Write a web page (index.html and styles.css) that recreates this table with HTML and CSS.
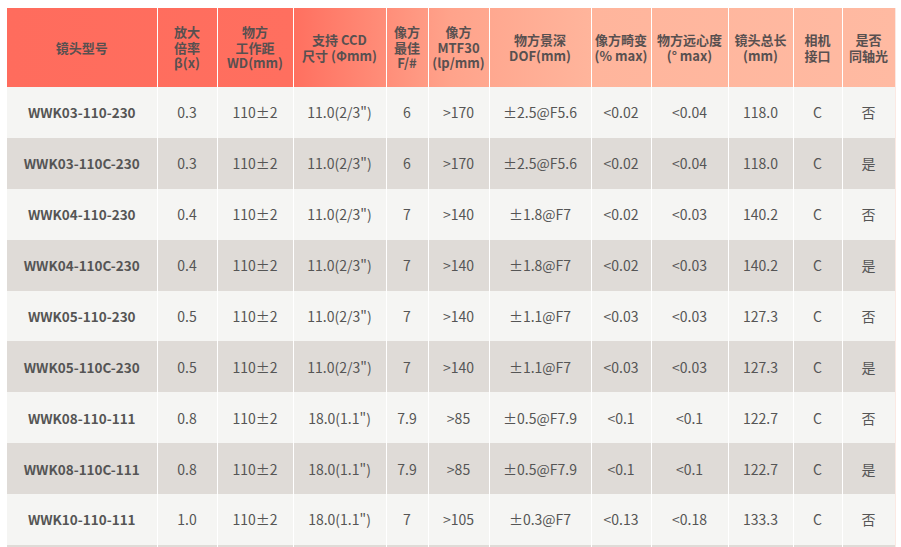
FILE: index.html
```html
<!DOCTYPE html>
<html lang="zh-CN">
<head>
<meta charset="utf-8">
<title>镜头参数</title>
<link rel="stylesheet" href="styles.css">
</head>
<body>
<table class="spec">
  <colgroup>
    <col class="c1"><col class="c2"><col class="c3"><col class="c4"><col class="c5"><col class="c6">
    <col class="c7"><col class="c8"><col class="c9"><col class="c10"><col class="c11"><col class="c12">
  </colgroup>
  <thead>
    <tr>
      <th>镜头型号</th>
      <th>放大<br>倍率<br>β(x)</th>
      <th>物方<br>工作距<br>WD(mm)</th>
      <th>支持 CCD<br>尺寸 (Φmm)</th>
      <th>像方<br>最佳<br>F/#</th>
      <th>像方<br>MTF30<br>(lp/mm)</th>
      <th>物方景深<br>DOF(mm)</th>
      <th>像方畸变<br>(% max)</th>
      <th>物方远心度<br>(° max)</th>
      <th>镜头总长<br>(mm)</th>
      <th>相机<br>接口</th>
      <th>是否<br>同轴光</th>
    </tr>
  </thead>
  <tbody>
    <tr><td class="model">WWK03-110-230</td><td>0.3</td><td>110±2</td><td>11.0(2/3")</td><td>6</td><td>&gt;170</td><td>±2.5@F5.6</td><td>&lt;0.02</td><td>&lt;0.04</td><td>118.0</td><td>C</td><td>否</td></tr>
    <tr><td class="model">WWK03-110C-230</td><td>0.3</td><td>110±2</td><td>11.0(2/3")</td><td>6</td><td>&gt;170</td><td>±2.5@F5.6</td><td>&lt;0.02</td><td>&lt;0.04</td><td>118.0</td><td>C</td><td>是</td></tr>
    <tr><td class="model">WWK04-110-230</td><td>0.4</td><td>110±2</td><td>11.0(2/3")</td><td>7</td><td>&gt;140</td><td>±1.8@F7</td><td>&lt;0.02</td><td>&lt;0.03</td><td>140.2</td><td>C</td><td>否</td></tr>
    <tr><td class="model">WWK04-110C-230</td><td>0.4</td><td>110±2</td><td>11.0(2/3")</td><td>7</td><td>&gt;140</td><td>±1.8@F7</td><td>&lt;0.02</td><td>&lt;0.03</td><td>140.2</td><td>C</td><td>是</td></tr>
    <tr><td class="model">WWK05-110-230</td><td>0.5</td><td>110±2</td><td>11.0(2/3")</td><td>7</td><td>&gt;140</td><td>±1.1@F7</td><td>&lt;0.03</td><td>&lt;0.03</td><td>127.3</td><td>C</td><td>否</td></tr>
    <tr><td class="model">WWK05-110C-230</td><td>0.5</td><td>110±2</td><td>11.0(2/3")</td><td>7</td><td>&gt;140</td><td>±1.1@F7</td><td>&lt;0.03</td><td>&lt;0.03</td><td>127.3</td><td>C</td><td>是</td></tr>
    <tr><td class="model">WWK08-110-111</td><td>0.8</td><td>110±2</td><td>18.0(1.1")</td><td>7.9</td><td>&gt;85</td><td>±0.5@F7.9</td><td>&lt;0.1</td><td>&lt;0.1</td><td>122.7</td><td>C</td><td>否</td></tr>
    <tr><td class="model">WWK08-110C-111</td><td>0.8</td><td>110±2</td><td>18.0(1.1")</td><td>7.9</td><td>&gt;85</td><td>±0.5@F7.9</td><td>&lt;0.1</td><td>&lt;0.1</td><td>122.7</td><td>C</td><td>是</td></tr>
    <tr><td class="model">WWK10-110-111</td><td>1.0</td><td>110±2</td><td>18.0(1.1")</td><td>7</td><td>&gt;105</td><td>±0.3@F7</td><td>&lt;0.13</td><td>&lt;0.18</td><td>133.3</td><td>C</td><td>否</td></tr>
    <tr class="cut"><td class="model"></td><td></td><td></td><td></td><td></td><td></td><td></td><td></td><td></td><td></td><td></td><td></td></tr>
  </tbody>
</table>
</body>
</html>
```
FILE: styles.css
```css
html, body {
  margin: 0;
  padding: 0;
  background: #ffffff;
}
body {
  padding: 8px 0 0 7px;
  font-family: "Noto Sans CJK SC", "Noto Sans", sans-serif;
  color: #555555;
  font-size: 14px;
}
.spec {
  border-collapse: collapse;
  table-layout: fixed;
  width: 888px;
}
.c1 { width: 150px; }
.c2 { width: 60px; }
.c3 { width: 76px; }
.c4 { width: 93px; }
.c5 { width: 42px; }
.c6 { width: 61px; }
.c7 { width: 102px; }
.c8 { width: 60px; }
.c9 { width: 77px; }
.c10 { width: 65px; }
.c11 { width: 49px; }
.c12 { width: 53px; }

.spec thead {
  background: linear-gradient(to right, #ff6c5d 0%, #ff6f5f 32%, #ffa38b 50%, #ffb59c 66%, #ffbaa2 100%);
}
.spec th {
  height: 79px;
  padding: 0;
  font-weight: bold;
  font-size: 13px;
  line-height: 15.5px;
  color: #585050;
  text-align: center;
  vertical-align: middle;
  border-right: 1px solid #ffffff;
}
.spec td {
  height: 50.875px;
  padding: 0;
  text-align: center;
  vertical-align: middle;
  border-right: 1px solid #ffffff;
  line-height: 18px;
}
.spec th:last-child,
.spec td:last-child {
  border-right: 1px solid #fbe9e3;
}
.spec tbody tr:nth-child(odd) { background: #f5f5f3; }
.spec tbody tr:nth-child(even) { background: #dfdbd7; }
.spec td.model {
  font-weight: bold;
  font-size: 13.5px;
}
```
